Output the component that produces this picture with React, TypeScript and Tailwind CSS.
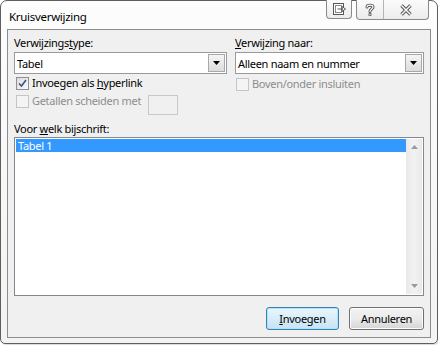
import React from 'react';

const font = { fontFamily: '"Noto Sans", "DejaVu Sans", sans-serif' };

const Checkbox: React.FC<{ checked?: boolean; disabled?: boolean }> = ({ checked, disabled }) => (
  <div
    className={
      'w-[13px] h-[13px] border flex items-center justify-center shrink-0 ' +
      (disabled
        ? 'border-[#c5c5c5] bg-[#f4f4f4]'
        : 'border-[#8e8f8f] bg-gradient-to-br from-[#dcdcdc] to-[#fbfbfb]')
    }
  >
    {checked && (
      <svg width="9" height="9" viewBox="0 0 9 9">
        <path d="M1 4.5 L3.5 7 L8 1" fill="none" stroke="#3d4f8f" strokeWidth="1.6" />
      </svg>
    )}
  </div>
);

const Combo: React.FC<{ value: string }> = ({ value }) => (
  <div className="h-[22px] border border-[#9a9a9a] bg-white flex items-center">
    <span className="flex-1 pl-[2px] leading-none">{value}</span>
    <div className="w-[17px] h-[18px] mr-[1px] border border-[#a8a8a8] bg-gradient-to-b from-[#f5f5f5] to-[#dcdcdc] flex items-center justify-center">
      <svg width="7" height="4" viewBox="0 0 7 4">
        <path d="M0 0 H7 L3.5 4 Z" fill="#000" />
      </svg>
    </div>
  </div>
);

const TitleButton: React.FC<{ w: string; children: React.ReactNode; className?: string }> = ({ w, children, className }) => (
  <div className={`${w} h-[19px] flex items-center justify-center ${className ?? ''}`}>{children}</div>
);

const App: React.FC = () => {
  return (
    <div className="w-[438px] h-[346px] bg-white text-[11px] tracking-[-0.3px]" style={font}>
      <div className="w-[438px] h-[344px] border border-[#5e5e5e] rounded-t-[7px] rounded-b-[5px] bg-gradient-to-b from-[#fdfdfd] to-[#f3f3f3] flex flex-col shadow-[1px_1px_1px_rgba(0,0,0,0.15)]">
        {/* title bar */}
        <div className="h-[28px] flex items-start shrink-0">
          <div className="pl-[8px] pt-[8px] text-[11.5px] leading-[15px] text-black">Kruisverwijzing</div>
          <div className="ml-auto mr-[8px] mt-[-1px] flex gap-[4px]">
            <TitleButton w="w-[26px]" className="border border-t-0 border-[#8a8a8a] rounded-b-[4px] bg-gradient-to-b from-[#fbfbfb] to-[#ececec]">
              <svg width="13" height="12" viewBox="0 0 13 12">
                <rect x="0.5" y="0.5" width="10" height="11" fill="#fff" stroke="#555" />
                <rect x="2.5" y="2.5" width="6" height="7" fill="none" stroke="#888" />
                <path d="M4.5 6 H10 M9 3.5 L12.5 6 L9 8.5 Z" fill="#fff" stroke="#555" />
              </svg>
            </TitleButton>
            <div className="flex border border-t-0 border-[#8a8a8a] rounded-b-[4px] bg-gradient-to-b from-[#fbfbfb] to-[#ececec]">
              <TitleButton w="w-[27px]" className="border-r border-[#b5b5b5]">
                <svg width="10" height="13" viewBox="0 0 10 13">
                  <path d="M2 4 C2 1.5 8 1.5 8 4 C8 6 5 6 5 8.5 M5 11 V11.8" fill="none" stroke="#555" strokeWidth="3" strokeLinecap="round" />
                  <path d="M2 4 C2 1.5 8 1.5 8 4 C8 6 5 6 5 8.5 M5 11 V11.8" fill="none" stroke="#fff" strokeWidth="1.2" strokeLinecap="round" />
                </svg>
              </TitleButton>
              <TitleButton w="w-[44px]">
                <svg width="14" height="12" viewBox="0 0 14 12">
                  <path d="M2.5 1.5 L11.5 10.5 M11.5 1.5 L2.5 10.5" fill="none" stroke="#555" strokeWidth="3.4" />
                  <path d="M2.5 1.5 L11.5 10.5 M11.5 1.5 L2.5 10.5" fill="none" stroke="#fff" strokeWidth="1.4" />
                </svg>
              </TitleButton>
            </div>
          </div>
        </div>

        {/* client area */}
        <div className="mx-[6px] mb-[5px] h-[309px] border border-[#8c8c8c] bg-[#f0f0f0] px-[6px] pt-[5px] flex flex-col text-black">
          <div className="flex gap-[8px]">
            <div className="w-[213px] flex flex-col">
              <div className="h-[15px] leading-[15px]">
                Verwijzings<span className="underline">t</span>ype:
              </div>
              <div className="mt-[2px]">
                <Combo value="Tabel" />
              </div>
              <div className="mt-[2px] h-[14px] flex items-center gap-[3px] pl-[2px]">
                <Checkbox checked />
                <span className="leading-[14px]">
                  Invoegen als <span className="underline">h</span>yperlink
                </span>
              </div>
              <div className="mt-[4px] h-[21px] flex items-start pl-[2px]">
                <div className="h-[14px] w-[132px] flex items-center gap-[3px]">
                  <Checkbox disabled />
                  <span className="leading-[14px] whitespace-nowrap text-[#8d8d8d]">Getallen scheiden met</span>
                </div>
                <div className="mt-[1px] w-[30px] h-[20px] border border-[#c9c9c9] bg-[#f0f0f0]" />
              </div>
            </div>
            <div className="flex-1 flex flex-col">
              <div className="h-[15px] leading-[15px]">
                <span className="underline">V</span>erwijzing naar:
              </div>
              <div className="mt-[2px]">
                <Combo value="Alleen naam en nummer" />
              </div>
              <div className="mt-[3px] h-[14px] flex items-center gap-[3px] pl-[1px]">
                <Checkbox disabled />
                <span className="leading-[14px] text-[#8d8d8d]">Boven/onder insluiten</span>
              </div>
            </div>
          </div>

          <div className="mt-[6px] h-[15px] leading-[15px]">
            Voor <span className="underline">w</span>elk bijschrift:
          </div>
          <div className="mt-[1px] h-[159px] border border-[#828790] bg-white flex p-[1px]">
            <div className="flex-1">
              <div className="h-[13px] bg-[#3399ff] text-white leading-[13px] pl-[2px]">Tabel 1</div>
            </div>
            <div className="w-[16px] bg-gradient-to-r from-[#e9e9e9] via-[#f2f2f2] to-[#e9e9e9] flex flex-col items-center justify-between py-[6px]">
              <svg width="7" height="4" viewBox="0 0 7 4">
                <path d="M0 4 H7 L3.5 0 Z" fill="#9a9a9a" />
              </svg>
              <svg width="7" height="4" viewBox="0 0 7 4">
                <path d="M0 0 H7 L3.5 4 Z" fill="#9a9a9a" />
              </svg>
            </div>
          </div>

          <div className="mt-[11px] flex justify-end gap-[10px]">
            <button className="w-[73px] h-[23px] rounded-[3px] border border-[#3c7fb1] bg-gradient-to-b from-[#eaf6fd] to-[#c6e3f5] shadow-[inset_0_0_0_1px_#aee3fa] leading-none">
              <span className="underline">I</span>nvoegen
            </button>
            <button className="w-[75px] h-[23px] rounded-[3px] border border-[#707070] bg-gradient-to-b from-[#f2f2f2] via-[#ebebeb] to-[#d5d5d5] shadow-[inset_0_0_0_1px_#fcfcfc] leading-none">
              Annuleren
            </button>
          </div>
        </div>
      </div>
    </div>
  );
};

export default App;
